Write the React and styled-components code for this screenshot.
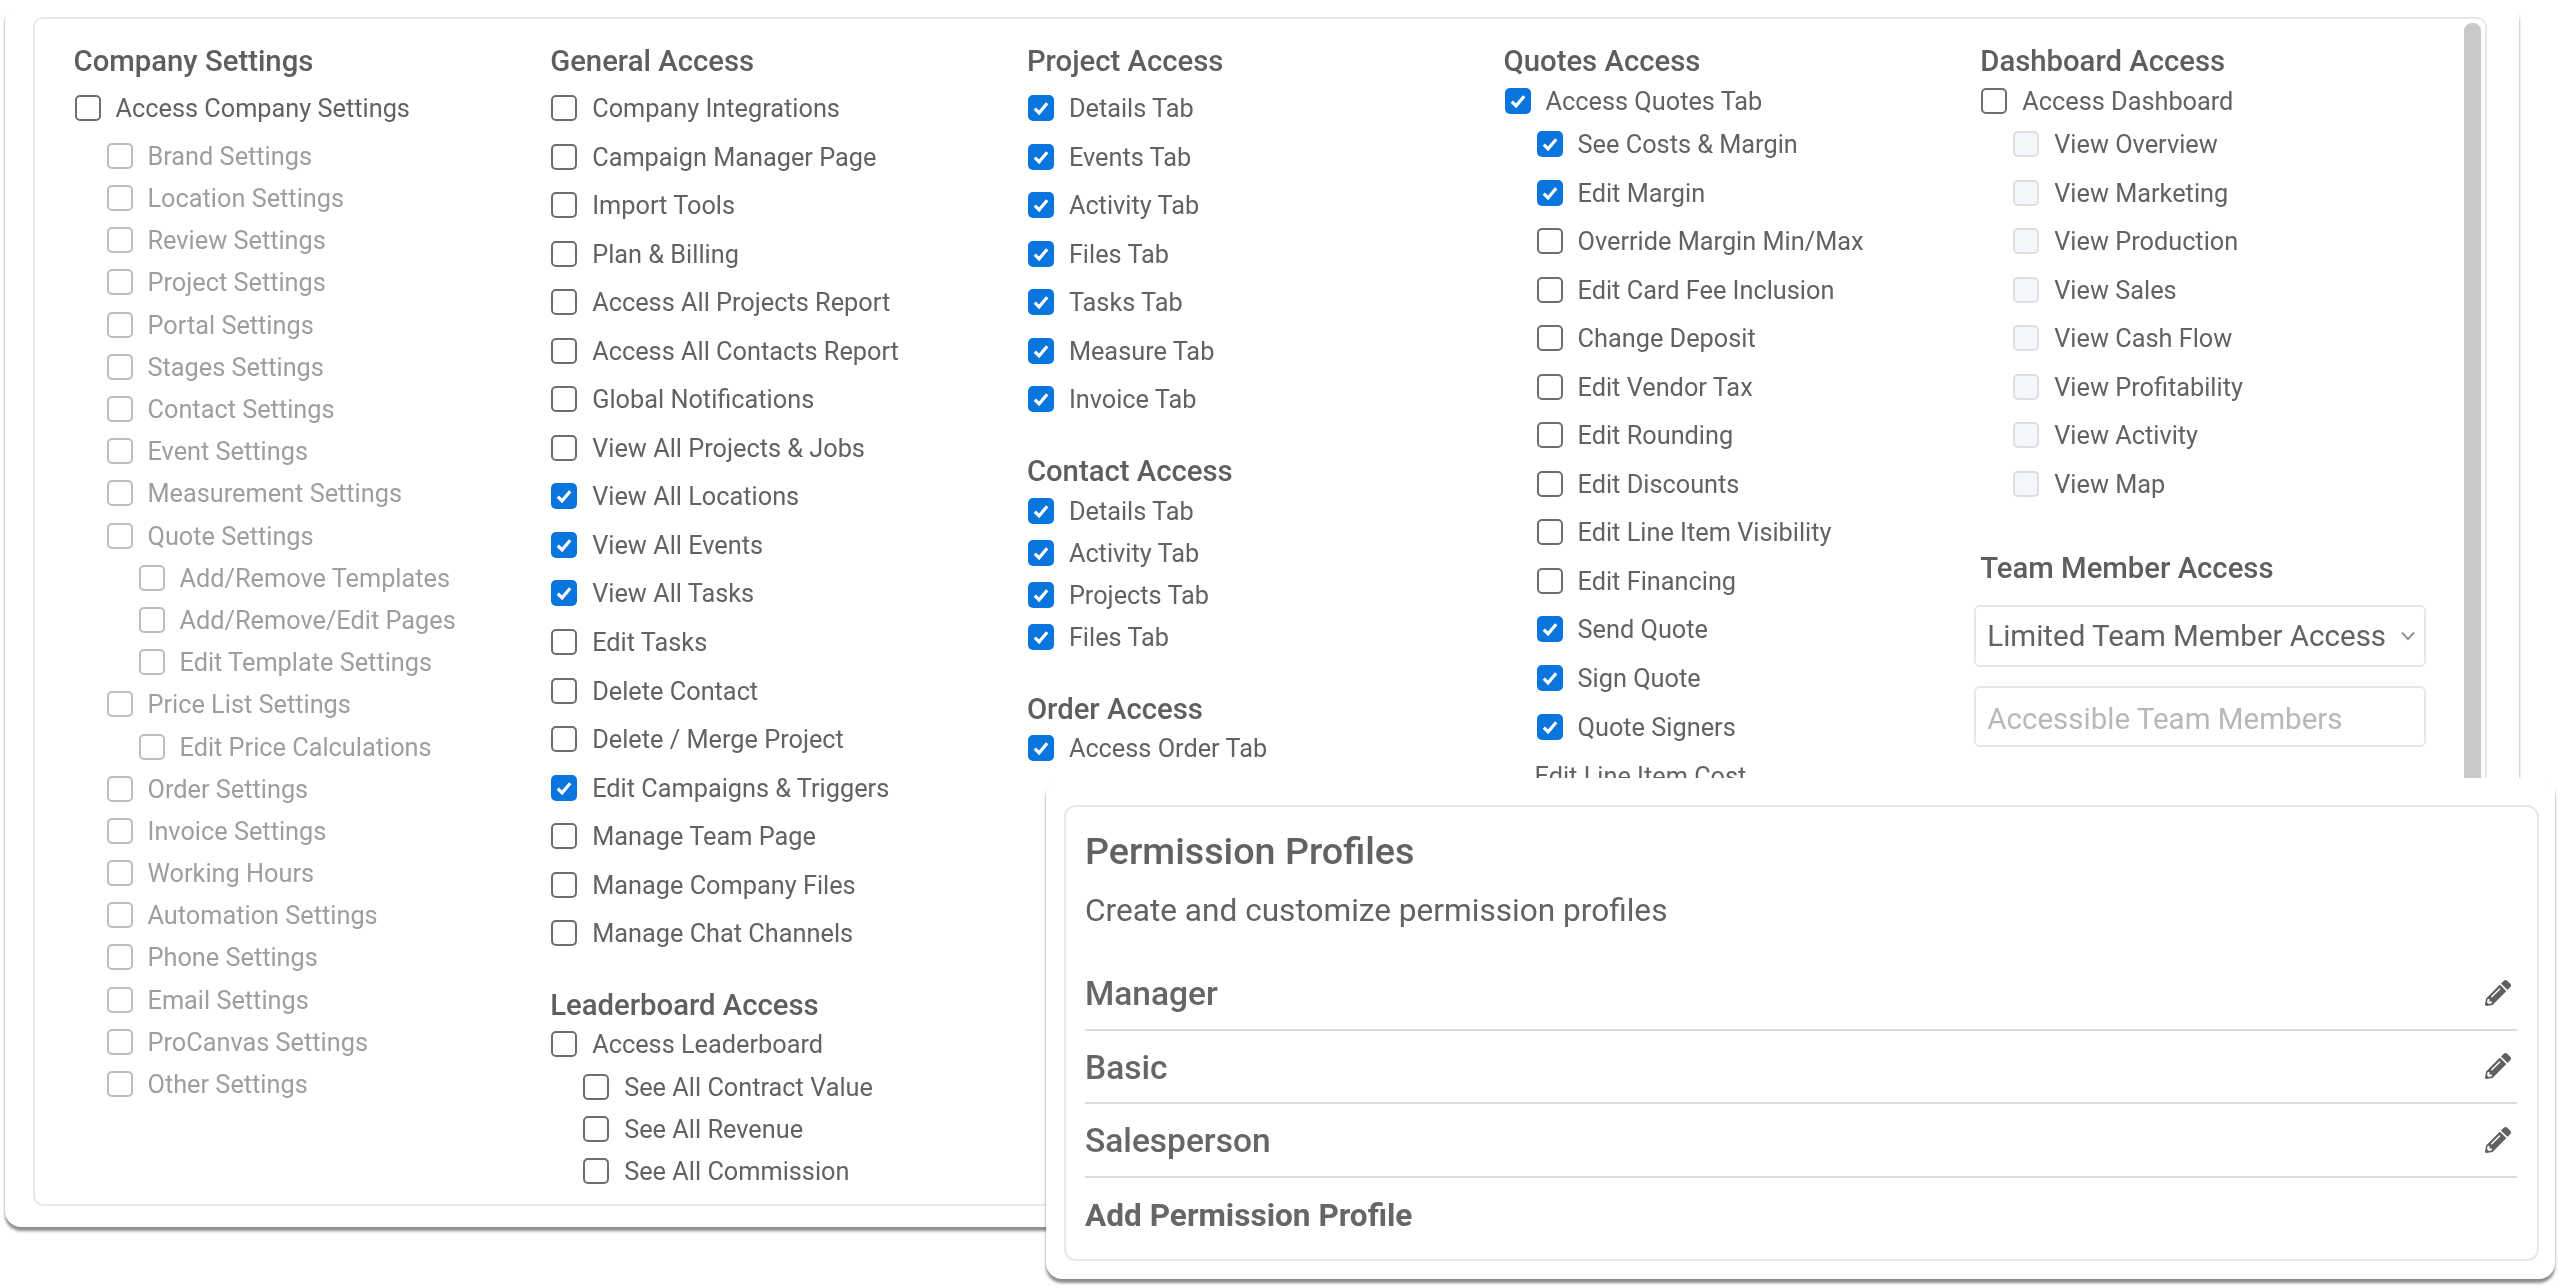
import React from 'react';
import styled, { createGlobalStyle } from 'styled-components';
import { FaPencilAlt } from 'react-icons/fa';

const GlobalStyle = createGlobalStyle`
  html, body {
    margin: 0;
    background: #fff;
  }
  body {
    font-family: Roboto, "Liberation Sans", sans-serif;
    color: #626262;
  }
`;

const Page = styled.div`
  position: relative;
  width: 2560px;
  height: 1288px;
  overflow: hidden;
  background: #fff;
  filter: blur(0.6px);
`;

const OuterCard = styled.div`
  box-sizing: border-box;
  width: 2514px;
  height: 1224px;
  margin: 3px 0 0 5px;
  padding: 14px 32px 21px 28px;
  background: #fff;
  border-radius: 16px;
  box-shadow: 0 4px 3px rgba(0, 0, 0, 0.45);
`;

const InnerCard = styled.div`
  position: relative;
  box-sizing: border-box;
  height: 100%;
  padding: 23px 0 0 38.5px;
  display: grid;
  grid-template-columns: repeat(5, 476.7px);
  border: 2px solid #e8e8e8;
  border-radius: 10px;
  overflow: hidden;
`;

const ScrollThumb = styled.div`
  position: absolute;
  top: 4px;
  right: 4px;
  bottom: 0;
  width: 17px;
  background: #c9c9c9;
  border-radius: 8px 8px 0 0;
`;

const Column = styled.div`
  display: flex;
  flex-direction: column;
`;

const Heading = styled.h3`
  height: 36px;
  margin: ${({ $top }) => $top || 0}px 0 0;
  font-size: 29.3px;
  font-weight: 500;
  line-height: 38px;
  color: #5e5e5e;
  white-space: nowrap;
`;

const Group = styled.div`
  display: flex;
  flex-direction: column;
  margin-top: ${({ $top }) => $top || 0}px;
`;

const Row = styled.div`
  display: flex;
  align-items: center;
  gap: 15px;
  height: ${({ $h }) => $h}px;
  padding-left: ${({ $level }) => 1 + ($level || 0) * 32}px;
`;

const Box = styled.span`
  box-sizing: border-box;
  flex: none;
  display: flex;
  align-items: center;
  justify-content: center;
  width: 26px;
  height: 26px;
  border-radius: 5px;
  border: 2px solid ${({ $tone }) => ($tone === 'muted' ? '#bdbdbd' : $tone === 'soft' ? '#dedede' : '#6e6e6e')};
  background: ${({ $tone }) => ($tone === 'soft' ? '#f3f6fb' : '#fff')};

  &[data-checked='true'] {
    border: none;
    background: #0a75dc;
  }
`;

const Label = styled.span`
  padding-top: 2px;
  font-size: 25.3px;
  line-height: 30px;
  white-space: nowrap;
  color: ${({ $tone }) => ($tone === 'muted' ? '#9e9e9e' : '#626262')};
`;

const BareLabel = styled(Label)`
  display: block;
  margin: 0;
  padding-left: 31px;
  line-height: 48.6px;
  height: 48.6px;
`;

const SelectBox = styled.div`
  box-sizing: border-box;
  display: flex;
  align-items: center;
  justify-content: space-between;
  width: 452px;
  height: 62px;
  margin: 20px 0 0 -6px;
  padding: 0 9px 0 11px;
  font-size: 29.5px;
  color: #626262;
  white-space: nowrap;
  border: 2px solid #e6e6e6;
  border-radius: 6px;
`;

const Placeholder = styled(SelectBox)`
  height: 61px;
  margin-top: 19px;
  padding-top: 6px;
  color: #b8b8b8;
`;

const Popup = styled.div`
  position: absolute;
  left: 1046px;
  top: 778px;
  box-sizing: border-box;
  width: 1509px;
  height: 501px;
  padding: 27px 16px 18px 18px;
  background: #fff;
  border-radius: 16px;
  box-shadow: 0 4px 3px rgba(0, 0, 0, 0.45);
`;

const PopupInner = styled.div`
  box-sizing: border-box;
  height: 100%;
  padding: 19px 20px 0 19px;
  border: 2px solid #e8e8e8;
  border-radius: 12px;
`;

const PopupTitle = styled.h2`
  height: 50px;
  margin: 0;
  font-size: 37.7px;
  font-weight: 500;
  line-height: 50px;
  color: #626262;
`;

const PopupText = styled.p`
  height: 40px;
  margin: 15px 0 26px;
  font-size: 31.6px;
  line-height: 40px;
  color: #626262;
`;

const ProfileRow = styled.div`
  box-sizing: border-box;
  display: flex;
  align-items: center;
  justify-content: space-between;
  height: 73.5px;
  padding-right: 6px;
  font-size: ${({ $last }) => ($last ? 31.6 : 33.5)}px;
  font-weight: ${({ $last }) => ($last ? 700 : 500)};
  color: #666;
  border-bottom: ${({ $last }) => ($last ? 'none' : '2px solid #dcdcdc')};
`;

const ProfileName = styled.span`
  padding-top: 2px;
`;

const Pencil = styled(FaPencilAlt)`
  width: 26px;
  height: 26px;
  color: #606060;
`;

const Check = () => (
  <svg width="18" height="18" viewBox="0 0 16 16" fill="none">
    <path d="M2.5 8.5 6.3 12.3 13.5 3.8" stroke="#fff" strokeWidth="2.8" />
  </svg>
);

const Chevron = () => (
  <svg width="14" height="10" viewBox="0 0 14 10" fill="none">
    <path d="M1 1.5 7 8 13 1.5" stroke="#777" strokeWidth="1.6" />
  </svg>
);

function Item({ label, h, level, checked, tone }) {
  return (
    <Row $h={h} $level={level}>
      <Box data-checked={!!checked} $tone={tone}>{checked && <Check />}</Box>
      <Label $tone={tone === 'muted' ? 'muted' : undefined}>{label}</Label>
    </Row>
  );
}

const BIG = 48.55;
const SMALL = 42.2;

const companyItems = [
  ['Brand Settings', 1], ['Location Settings', 1], ['Review Settings', 1], ['Project Settings', 1],
  ['Portal Settings', 1], ['Stages Settings', 1], ['Contact Settings', 1], ['Event Settings', 1],
  ['Measurement Settings', 1], ['Quote Settings', 1], ['Add/Remove Templates', 2],
  ['Add/Remove/Edit Pages', 2], ['Edit Template Settings', 2], ['Price List Settings', 1],
  ['Edit Price Calculations', 2], ['Order Settings', 1], ['Invoice Settings', 1],
  ['Working Hours', 1], ['Automation Settings', 1], ['Phone Settings', 1], ['Email Settings', 1],
  ['ProCanvas Settings', 1], ['Other Settings', 1],
];

const generalItems = [
  ['Company Integrations'], ['Campaign Manager Page'], ['Import Tools'], ['Plan & Billing'],
  ['Access All Projects Report'], ['Access All Contacts Report'], ['Global Notifications'],
  ['View All Projects & Jobs'], ['View All Locations', true], ['View All Events', true],
  ['View All Tasks', true], ['Edit Tasks'], ['Delete Contact'], ['Delete / Merge Project'],
  ['Edit Campaigns & Triggers', true], ['Manage Team Page'], ['Manage Company Files'],
  ['Manage Chat Channels'],
];

const quoteItems = [
  ['See Costs & Margin', true], ['Edit Margin', true], ['Override Margin Min/Max'],
  ['Edit Card Fee Inclusion'], ['Change Deposit'], ['Edit Vendor Tax'], ['Edit Rounding'],
  ['Edit Discounts'], ['Edit Line Item Visibility'], ['Edit Financing'], ['Send Quote', true],
  ['Sign Quote', true], ['Quote Signers', true],
];

const projectTabs = ['Details Tab', 'Events Tab', 'Activity Tab', 'Files Tab', 'Tasks Tab', 'Measure Tab', 'Invoice Tab'];
const contactTabs = ['Details Tab', 'Activity Tab', 'Projects Tab', 'Files Tab'];
const dashboardItems = ['View Overview', 'View Marketing', 'View Production', 'View Sales', 'View Cash Flow', 'View Profitability', 'View Activity', 'View Map'];
const profiles = ['Manager', 'Basic', 'Salesperson'];

export default function App() {
  return (
    <Page>
      <GlobalStyle />
      <OuterCard>
        <InnerCard>
          <Column>
            <Heading>Company Settings</Heading>
            <Group $top={5.7}>
              <Item h={BIG} label="Access Company Settings" />
            </Group>
            <Group $top={2.6}>
              {companyItems.map(([label, level]) => (
                <Item key={label} h={SMALL} level={level} label={label} tone="muted" />
              ))}
            </Group>
          </Column>

          <Column>
            <Heading>General Access</Heading>
            <Group $top={5.7}>
              {generalItems.map(([label, checked]) => (
                <Item key={label} h={BIG} label={label} checked={checked} />
              ))}
            </Group>
            <Heading $top={28.7}>Leaderboard Access</Heading>
            <Group $top={1}>
              <Item h={SMALL} label="Access Leaderboard" />
              <Item h={SMALL} level={1} label="See All Contract Value" />
              <Item h={SMALL} level={1} label="See All Revenue" />
              <Item h={SMALL} level={1} label="See All Commission" />
            </Group>
          </Column>

          <Column>
            <Heading>Project Access</Heading>
            <Group $top={5.7}>
              {projectTabs.map((label) => (
                <Item key={label} h={BIG} label={label} checked />
              ))}
            </Group>
            <Heading $top={28.1}>Contact Access</Heading>
            <Group $top={1.9}>
              {contactTabs.map((label) => (
                <Item key={label} h={SMALL} label={label} checked />
              ))}
            </Group>
            <Heading $top={31.9}>Order Access</Heading>
            <Group $top={1}>
              <Item h={SMALL} label="Access Order Tab" checked />
            </Group>
          </Column>

          <Column>
            <Heading>Quotes Access</Heading>
            <Group $top={4.3}>
              <Item h={37.4} label="Access Quotes Tab" checked />
              {quoteItems.map(([label, checked]) => (
                <Item key={label} h={BIG} level={1} label={label} checked={checked} />
              ))}
              <BareLabel>Edit Line Item Cost</BareLabel>
            </Group>
          </Column>

          <Column>
            <Heading>Dashboard Access</Heading>
            <Group $top={4.3}>
              <Item h={37.4} label="Access Dashboard" />
              {dashboardItems.map((label) => (
                <Item key={label} h={BIG} level={1} label={label} tone="soft" />
              ))}
            </Group>
            <Heading $top={40.7}>Team Member Access</Heading>
            <SelectBox>
              Limited Team Member Access
              <Chevron />
            </SelectBox>
            <Placeholder>Accessible Team Members</Placeholder>
          </Column>

          <ScrollThumb />
        </InnerCard>
      </OuterCard>

      <Popup>
        <PopupInner>
          <PopupTitle>Permission Profiles</PopupTitle>
          <PopupText>Create and customize permission profiles</PopupText>
          {profiles.map((name) => (
            <ProfileRow key={name}>
              <ProfileName>{name}</ProfileName>
              <Pencil />
            </ProfileRow>
          ))}
          <ProfileRow $last><ProfileName>Add Permission Profile</ProfileName></ProfileRow>
        </PopupInner>
      </Popup>
    </Page>
  );
}
